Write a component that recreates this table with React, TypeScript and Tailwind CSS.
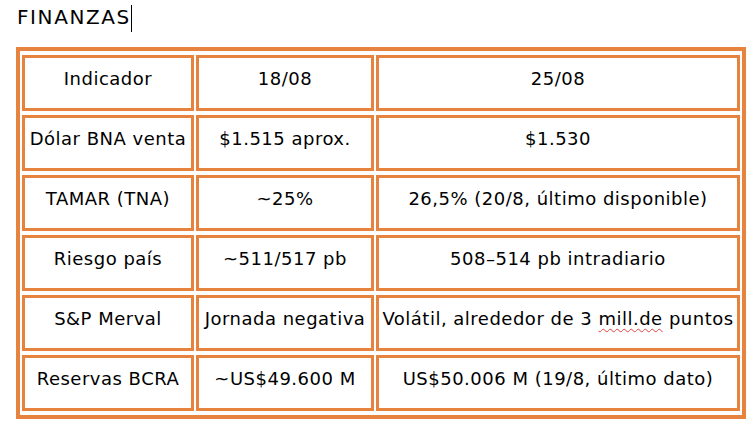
const rows = [
  ["Indicador", "18/08", "25/08"],
  ["Dólar BNA venta", "$1.515 aprox.", "$1.530"],
  ["TAMAR (TNA)", "~25%", "26,5% (20/8, último disponible)"],
  ["Riesgo país", "~511/517 pb", "508–514 pb intradiario"],
  ["S&P Merval", "Jornada negativa", "MERVAL"],
  ["Reservas BCRA", "~US$49.600 M", "US$50.006 M (19/8, último dato)"],
];

export default function App() {
  return (
    <div className="w-[750px] h-[426px] bg-white text-black font-['Comic_Sans_MS','DejaVu_Sans',sans-serif] overflow-hidden">
      {/* Title with text cursor */}
      <div className="pl-[17px] pt-[4px] h-[47px] flex items-start">
        <span className="text-[20px] leading-[26px] tracking-[1.6px]">FINANZAS</span>
        <span className="w-px h-[27px] bg-black mt-[1px]" />
      </div>

      <table className="ml-[16px] border-[4px] border-[#e5833f] border-separate border-spacing-x-[2px] border-spacing-y-[4px] table-fixed w-[730px]">
        <colgroup>
          <col className="w-[172px]" />
          <col className="w-[178px]" />
          <col />
        </colgroup>
        <tbody>
          {rows.map((r, i) => (
            <tr key={i}>
              {r.map((c, j) => (
                <td
                  key={j}
                  className="border-[3px] border-[#e5833f] h-[56px] text-center align-middle text-[18px] tracking-[0.5px] leading-[22px] pb-[8px] px-0 whitespace-nowrap"
                >
                  {c === "MERVAL" ? (
                    <>
                      Volátil, alrededor de 3{" "}
                      <span className="underline decoration-wavy decoration-[#e04040] decoration-1 underline-offset-[3px]">
                        mill.de
                      </span>{" "}
                      puntos
                    </>
                  ) : (
                    c
                  )}
                </td>
              ))}
            </tr>
          ))}
        </tbody>
      </table>
    </div>
  );
}
